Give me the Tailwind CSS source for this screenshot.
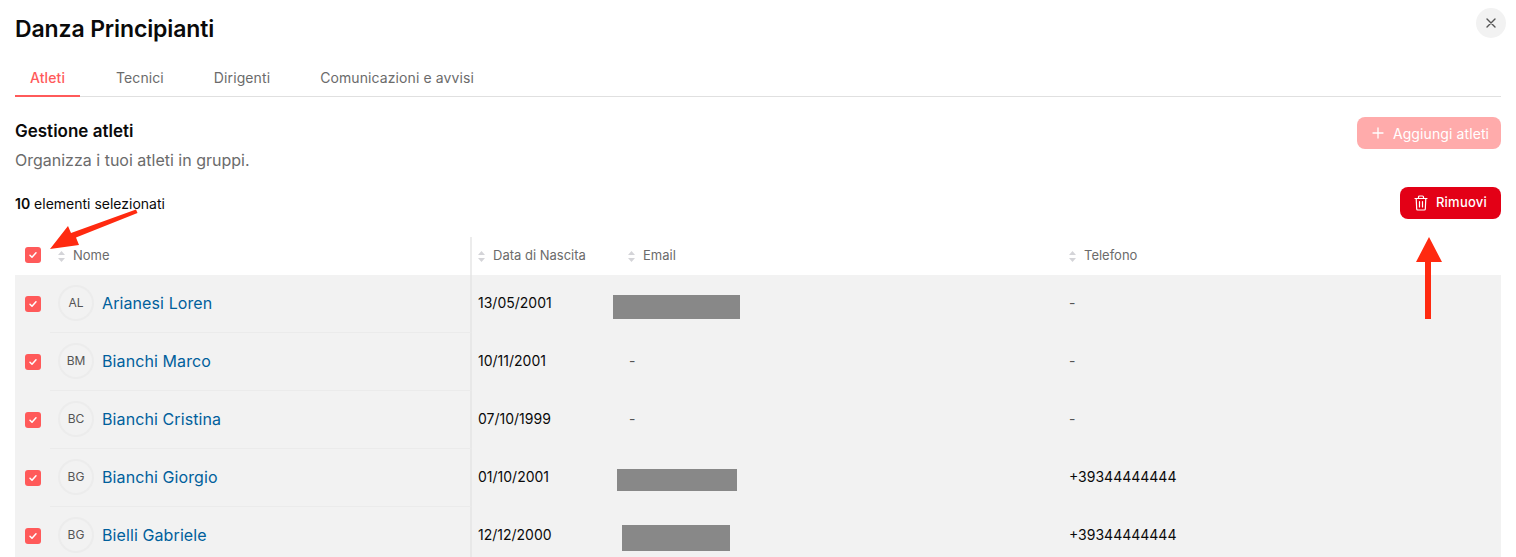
<!DOCTYPE html>
<html lang="en">
<head>
  <meta charset="UTF-8" />
  <title>Danza Principianti</title>
  <script src="https://cdn.jsdelivr.net/npm/@tailwindcss/browser@4"></script>
</head>
<body class="relative h-[557px] overflow-hidden bg-white font-['Inter',sans-serif] text-[#0a0a0a]">

  <button class="absolute left-[1476px] top-[8px] flex h-[30px] w-[30px] items-center justify-center rounded-full bg-[#f2f2f2] text-[#555]">
    <svg width="12" height="12" viewBox="0 0 12 12" fill="none" stroke="currentColor" stroke-width="1.4" stroke-linecap="round"><path d="M2 2l8 8M10 2l-8 8" /></svg>
  </button>

  <div class="px-[15px]">
    <h1 class="pt-[14px] text-[23px] leading-[30px] font-semibold tracking-[-0.13px]">Danza Principianti</h1>

    <div class="mt-[14px] flex h-[39px] border-b border-[#e0e0e0] text-[14px] tracking-[0.1px] text-[#6b6b6b]">
      <a class="h-[39px] w-[65px] border-b-2 border-[#ff5a5a] pt-[9px] text-center font-medium text-[#ff5a5a]">Atleti</a>
      <a class="ml-[36px] pt-[9px]">Tecnici</a>
      <a class="ml-[50px] pt-[9px]">Dirigenti</a>
      <a class="ml-[50px] pt-[9px]">Comunicazioni e avvisi</a>
    </div>

    <div class="mt-[20px] flex items-start justify-between">
      <div>
        <h2 class="text-[17px] leading-[28px] font-semibold">Gestione atleti</h2>
        <p class="mt-[4px] text-[16px] leading-[22px] text-[#6b6b6b]">Organizza i tuoi atleti in gruppi.</p>
      </div>
      <button class="flex h-[32px] w-[144px] items-center justify-center gap-[9px] rounded-lg bg-[#ffabab] pl-[3px] text-[14px] tracking-[0.1px] text-white">
        <svg width="12" height="12" viewBox="0 0 12 12" fill="none" stroke="currentColor" stroke-width="1.3" stroke-linecap="round"><path d="M6 1v10M1 6h10" /></svg>
        Aggiungi atleti
      </button>
    </div>

    <div class="mt-[16px] flex items-center justify-between">
      <p class="pt-[1px] text-[14px]"><span class="font-semibold">10</span> elementi selezionati</p>
      <button class="flex h-[32px] w-[101px] items-center justify-center gap-[8px] rounded-lg bg-[#e30016] text-[13px] font-medium tracking-[0.25px] text-white">
        <svg width="14" height="16" viewBox="0 0 14 16" fill="none" stroke="currentColor" stroke-width="1.2" stroke-linecap="round" stroke-linejoin="round"><path d="M1 3.500h12M4.500 3.500V2a1 1 0 0 1 1-1h3a1 1 0 0 1 1 1v1.500M2.200 3.500l.5 10.500a1 1 0 0 0 1 1h6.600a1 1 0 0 0 1-1l.5-10.500M5.500 6.500v5.500M8.500 6.500v5.500" /></svg>
        Rimuovi
      </button>
    </div>

    <div class="mt-[18px] grid h-[38px] grid-cols-[35px_422px_148px_441px_1fr] items-center text-[13px] text-[#6b6b6b]">
      <div class="pb-[2px] pl-[10px]"><span class="flex h-4 w-4 items-center justify-center rounded-[3px] bg-[#ff5a5a]"><svg width="10" height="10" viewBox="0 0 10 10" fill="none" stroke="#fff" stroke-width="1.5" stroke-linecap="round" stroke-linejoin="round"><path d="M2 5.300l2 2 4-4.600" /></svg></span></div>
      <div class="flex h-full items-center gap-[7px] border-r-2 border-[#ececec] pl-[7px]"><svg width="9" height="13" viewBox="0 0 9 13" fill="#d4d4d8"><path d="M4.500 1L8 5H1zM4.500 12L1 8h7z" /></svg>Nome</div>
      <div class="flex items-center gap-[7px] pl-[5px]"><svg width="9" height="13" viewBox="0 0 9 13" fill="#d4d4d8"><path d="M4.500 1L8 5H1zM4.500 12L1 8h7z" /></svg>Data di Nascita</div>
      <div class="flex items-center gap-[7px] pl-[7px]"><svg width="9" height="13" viewBox="0 0 9 13" fill="#d4d4d8"><path d="M4.500 1L8 5H1zM4.500 12L1 8h7z" /></svg>Email</div>
      <div class="flex items-center gap-[7px] pl-[7px]"><svg width="9" height="13" viewBox="0 0 9 13" fill="#d4d4d8"><path d="M4.500 1L8 5H1zM4.500 12L1 8h7z" /></svg>Telefono</div>
    </div>

    <div class="bg-[#f2f2f2] text-[14px]">
      <div class="grid h-[58px] grid-cols-[35px_422px_148px_441px_1fr] items-center">
        <div class="pl-[10px]"><span class="flex h-4 w-4 items-center justify-center rounded-[3px] bg-[#ff5a5a]"><svg width="10" height="10" viewBox="0 0 10 10" fill="none" stroke="#fff" stroke-width="1.5" stroke-linecap="round" stroke-linejoin="round"><path d="M2 5.300l2 2 4-4.600" /></svg></span></div>
        <div class="flex h-full items-center gap-[8px] border-r-2 border-b border-r-[#e8e8e8] border-b-[#ebebeb] pb-[2px] pl-[8px]"><span class="flex h-[36px] w-[36px] items-center justify-center rounded-full border-2 border-[#ececec] text-[12px] text-[#555]">AL</span><a class="text-[16px] tracking-[0.1px] text-[#00609c]">Arianesi Loren</a></div>
        <div class="pb-[3px] pl-[6px]">13/05/2001</div>
        <div><div class="ml-[-7px] h-[24px] w-[127px] translate-y-[3px] bg-[#888888]"></div></div>
        <div class="pb-[3px] pl-[8px] text-[#555]">-</div>
      </div>
      <div class="grid h-[58px] grid-cols-[35px_422px_148px_441px_1fr] items-center">
        <div class="pl-[10px]"><span class="flex h-4 w-4 items-center justify-center rounded-[3px] bg-[#ff5a5a]"><svg width="10" height="10" viewBox="0 0 10 10" fill="none" stroke="#fff" stroke-width="1.5" stroke-linecap="round" stroke-linejoin="round"><path d="M2 5.300l2 2 4-4.600" /></svg></span></div>
        <div class="flex h-full items-center gap-[8px] border-r-2 border-b border-r-[#e8e8e8] border-b-[#ebebeb] pb-[2px] pl-[8px]"><span class="flex h-[36px] w-[36px] items-center justify-center rounded-full border-2 border-[#ececec] text-[12px] text-[#555]">BM</span><a class="text-[16px] tracking-[0.1px] text-[#00609c]">Bianchi Marco</a></div>
        <div class="pb-[3px] pl-[6px]">10/11/2001</div>
        <div class="pb-[3px] pl-[9px] text-[#555]">-</div>
        <div class="pb-[3px] pl-[8px] text-[#555]">-</div>
      </div>
      <div class="grid h-[58px] grid-cols-[35px_422px_148px_441px_1fr] items-center">
        <div class="pl-[10px]"><span class="flex h-4 w-4 items-center justify-center rounded-[3px] bg-[#ff5a5a]"><svg width="10" height="10" viewBox="0 0 10 10" fill="none" stroke="#fff" stroke-width="1.5" stroke-linecap="round" stroke-linejoin="round"><path d="M2 5.300l2 2 4-4.600" /></svg></span></div>
        <div class="flex h-full items-center gap-[8px] border-r-2 border-b border-r-[#e8e8e8] border-b-[#ebebeb] pb-[2px] pl-[8px]"><span class="flex h-[36px] w-[36px] items-center justify-center rounded-full border-2 border-[#ececec] text-[12px] text-[#555]">BC</span><a class="text-[16px] tracking-[0.1px] text-[#00609c]">Bianchi Cristina</a></div>
        <div class="pb-[3px] pl-[6px]">07/10/1999</div>
        <div class="pb-[3px] pl-[9px] text-[#555]">-</div>
        <div class="pb-[3px] pl-[8px] text-[#555]">-</div>
      </div>
      <div class="grid h-[58px] grid-cols-[35px_422px_148px_441px_1fr] items-center">
        <div class="pl-[10px]"><span class="flex h-4 w-4 items-center justify-center rounded-[3px] bg-[#ff5a5a]"><svg width="10" height="10" viewBox="0 0 10 10" fill="none" stroke="#fff" stroke-width="1.5" stroke-linecap="round" stroke-linejoin="round"><path d="M2 5.300l2 2 4-4.600" /></svg></span></div>
        <div class="flex h-full items-center gap-[8px] border-r-2 border-b border-r-[#e8e8e8] border-b-[#ebebeb] pb-[2px] pl-[8px]"><span class="flex h-[36px] w-[36px] items-center justify-center rounded-full border-2 border-[#ececec] text-[12px] text-[#555]">BG</span><a class="text-[16px] tracking-[0.1px] text-[#00609c]">Bianchi Giorgio</a></div>
        <div class="pb-[3px] pl-[6px]">01/10/2001</div>
        <div><div class="ml-[-3px] h-[22px] w-[120px] translate-y-[2px] bg-[#888888]"></div></div>
        <div class="pb-[3px] pl-[8px]">+39344444444</div>
      </div>
      <div class="grid h-[58px] grid-cols-[35px_422px_148px_441px_1fr] items-center">
        <div class="pl-[10px]"><span class="flex h-4 w-4 items-center justify-center rounded-[3px] bg-[#ff5a5a]"><svg width="10" height="10" viewBox="0 0 10 10" fill="none" stroke="#fff" stroke-width="1.5" stroke-linecap="round" stroke-linejoin="round"><path d="M2 5.300l2 2 4-4.600" /></svg></span></div>
        <div class="flex h-full items-center gap-[8px] border-r-2 border-b border-r-[#e8e8e8] border-b-[#ebebeb] pb-[2px] pl-[8px]"><span class="flex h-[36px] w-[36px] items-center justify-center rounded-full border-2 border-[#ececec] text-[12px] text-[#555]">BG</span><a class="text-[16px] tracking-[0.1px] text-[#00609c]">Bielli Gabriele</a></div>
        <div class="pb-[3px] pl-[6px]">12/12/2000</div>
        <div><div class="ml-[2px] h-[26px] w-[108px] translate-y-[2px] bg-[#888888]"></div></div>
        <div class="pb-[3px] pl-[8px]">+39344444444</div>
      </div>
    </div>
  </div>

  <!-- annotation arrows drawn over the screenshot -->
  <svg class="pointer-events-none absolute left-0 top-0" width="1516" height="557" fill="#ff2a10">
    <path d="M136 209.500L137.500 213L76 237.500L79 245L50 249L68 226L71 233Z" />
    <path d="M1425 319V262H1416L1429 237L1442 262H1431V319Z" />
  </svg>
</body>
</html>
